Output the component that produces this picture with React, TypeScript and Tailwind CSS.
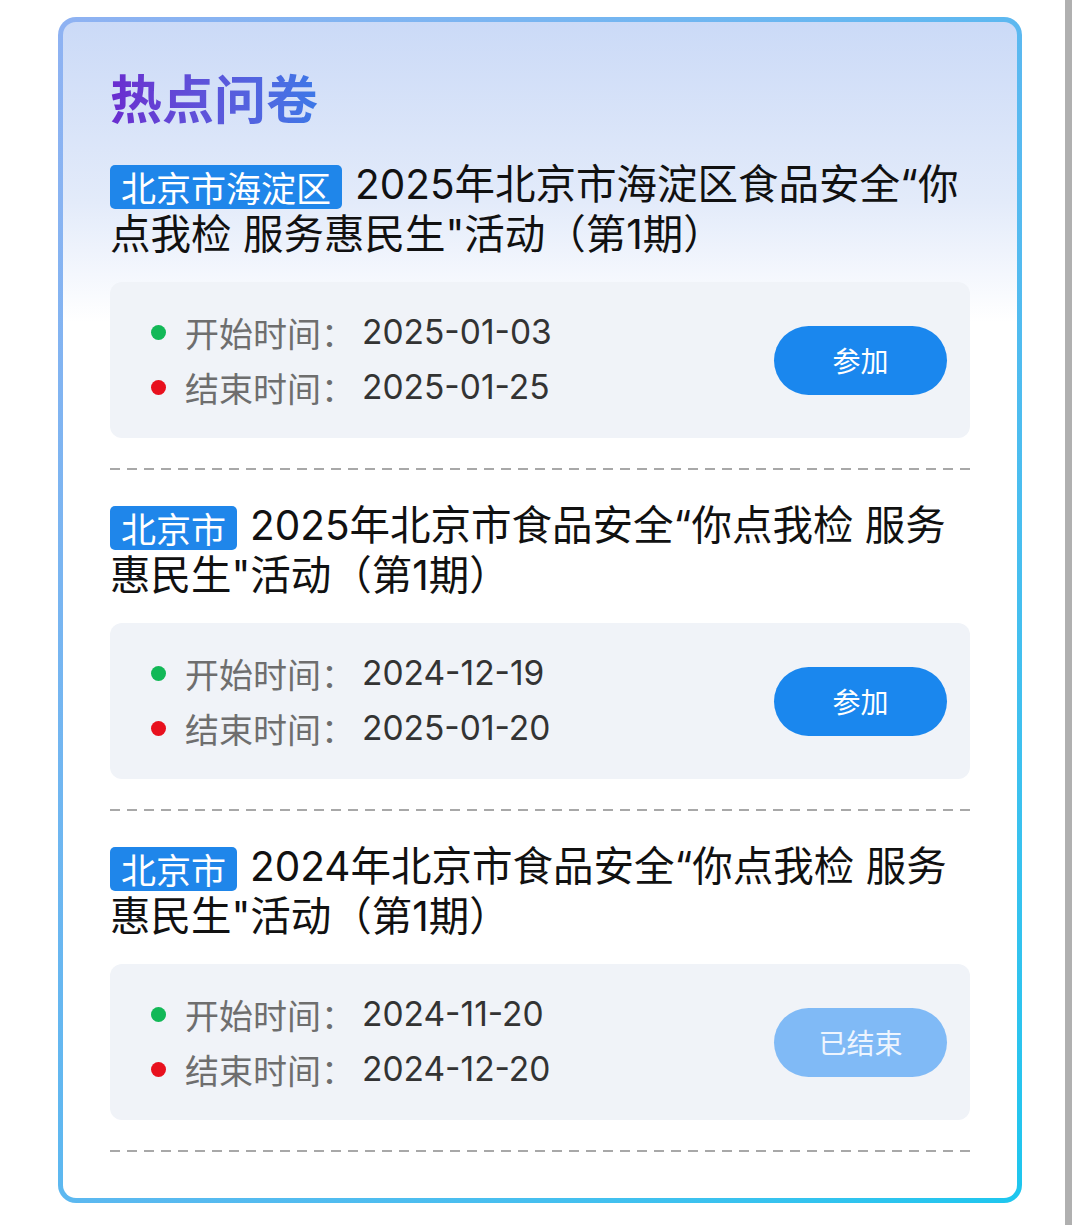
import React from "react";

interface Survey {
  region: string;
  title: string;
  start: string;
  end: string;
  ended?: boolean;
}

const surveys: Survey[] = [
  {
    region: "北京市海淀区",
    title: "2025年北京市海淀区食品安全“你点我检 服务惠民生\"活动（第1期）",
    start: "2025-01-03",
    end: "2025-01-25",
  },
  {
    region: "北京市",
    title: "2025年北京市食品安全“你点我检 服务惠民生\"活动（第1期）",
    start: "2024-12-19",
    end: "2025-01-20",
  },
  {
    region: "北京市",
    title: "2024年北京市食品安全“你点我检 服务惠民生\"活动（第1期）",
    start: "2024-11-20",
    end: "2024-12-20",
    ended: true,
  },
];

const latin = { fontFamily: 'Inter, "Noto Sans CJK SC", sans-serif' };

const SurveyItem = ({ s }: { s: Survey }) => (
  <div className="flex flex-col">
    <div className="text-[40.5px] leading-[50px] text-[#111]" style={latin}>
      <span
        className="inline-block align-[-3px] rounded-[5px] bg-[#1f86ea] px-[11px] text-[35px] leading-[44px] text-white mr-[13px]"
        style={{ fontFamily: '"Noto Sans CJK SC", sans-serif' }}
      >
        {s.region}
      </span>
      {s.title}
    </div>

    <div className="mt-[22px] h-[156px] rounded-[12px] bg-[#f0f3f8] pl-[41px] pr-[23px] flex items-center justify-between">
      <div className="flex flex-col gap-[15px]">
        <div className="flex items-center h-[40px]">
          <span className="w-[15px] h-[15px] rounded-full bg-[#12b857]" />
          <span className="ml-[19px] text-[34px] text-[#6e6e6e]">开始时间：</span>
          <span className="ml-[7px] text-[33.5px] text-[#333]" style={latin}>
            {s.start}
          </span>
        </div>
        <div className="flex items-center h-[40px]">
          <span className="w-[15px] h-[15px] rounded-full bg-[#e8101e]" />
          <span className="ml-[19px] text-[34px] text-[#6e6e6e]">结束时间：</span>
          <span className="ml-[7px] text-[33.5px] text-[#333]" style={latin}>
            {s.end}
          </span>
        </div>
      </div>
      <div
        className={
          s.ended
            ? "w-[173px] h-[69px] rounded-full bg-[#80baf6] text-[#eef5fe] text-[28px] flex items-center justify-center"
            : "w-[173px] h-[69px] rounded-full bg-[#1a87ee] text-white text-[28px] flex items-center justify-center"
        }
      >
        {s.ended ? "已结束" : "参加"}
      </div>
    </div>

    <div className="mt-[30px] h-[2px] bg-[repeating-linear-gradient(to_right,#a8a8a8_0_10px,transparent_10px_17px)]" />
  </div>
);

export default function App() {
  return (
    <div
      className="w-[1080px] h-[1225px] bg-white flex"
      style={{ fontFamily: '"Noto Sans CJK SC", "Noto Sans", sans-serif' }}
    >
      <div className="ml-[58px] mt-[17px] w-[964px] h-[1186px] rounded-[18px] p-[5px] bg-gradient-to-br from-[#8fb2f2] via-[#5cb8f0] to-[#1cc6ee]">
        <div className="h-full rounded-[13px] bg-[linear-gradient(to_bottom,#cbdaf7_0px,#e3ebfa_180px,#ffffff_300px)] px-[47px] pt-[44px]">
          <h1 className="text-[52px] leading-[62px] font-bold bg-gradient-to-r from-[#6a2bcf] to-[#3b78e7] bg-clip-text text-transparent w-fit">
            热点问卷
          </h1>
          <div className="mt-[32px] flex flex-col gap-[31px]">
            {surveys.map((s, i) => (
              <SurveyItem key={i} s={s} />
            ))}
          </div>
        </div>
      </div>
      <div className="ml-[43px] w-[7px] h-full bg-[#b0b0b0]" />
    </div>
  );
}
